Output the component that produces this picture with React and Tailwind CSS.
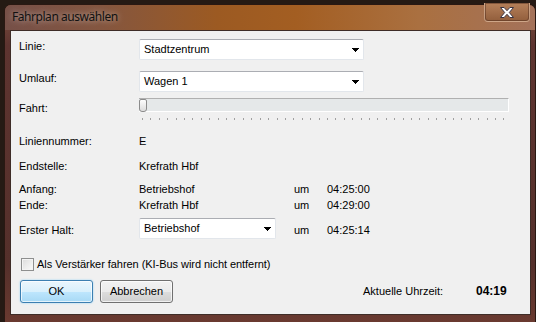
const ticks = Array.from({ length: 44 });

function Combo({ value, className }) {
  return (
    <div
      className={`flex h-[21px] items-center justify-between rounded-[2px] border border-[#e2e6eb] border-t-[#abadb3] bg-white pl-[4px] pr-[4px] ${className}`}
    >
      <span className="leading-[13px]">{value}</span>
      <svg width="7" height="4" viewBox="0 0 7 4" shapeRendering="crispEdges">
        <path d="M0 0h7L3.5 4z" fill="#000" />
      </svg>
    </div>
  );
}

function Label({ children, className = "" }) {
  return <div className={`w-[120px] shrink-0 leading-[13px] ${className}`}>{children}</div>;
}

export default function App() {
  return (
    <div className="h-[322px] w-[536px] overflow-hidden bg-[#251a14] pl-[4px] pt-[4px] font-['Liberation_Sans',Arial,sans-serif] text-[11px] text-black">
      <div className="flex h-[320px] w-[532px] flex-col rounded-t-[7px] border border-[#2a1812] bg-[linear-gradient(to_bottom,#7a4e3c_0px,#5e3430_40px,#55302b_260px,#6a3a30_100%)]">
        {/* title bar */}
        <div className="flex h-[25px] shrink-0 items-start justify-between rounded-t-[6px] bg-[linear-gradient(to_right,#765048_0%,#845640_18%,#9c5a22_40%,#a35e22_55%,#aa7040_78%,#a4725a_100%)]">
          <span className="mt-[4px] pl-[7px] font-['Noto_Sans',sans-serif] text-[12px] leading-[16px] tracking-[-0.45px] text-[#111] [text-shadow:0_0_6px_rgba(255,255,255,0.6)]">
            Fahrplan auswählen
          </span>
          <div className="mr-[5px] mt-[-2px] flex h-[19px] w-[46px] items-center justify-center rounded-b-[4px] border border-t-0 border-[#e0c0a8]/60 bg-[linear-gradient(to_bottom,#b5805a,#925e3c)] shadow-[inset_0_0_0_1px_rgba(60,30,20,0.4)]">
            <svg width="14" height="11" viewBox="0 0 14 11">
              <path
                d="M0.5 0.5h3.6l2.9 3.2 2.9-3.2h3.6L9.3 5.5l4.2 5h-3.6L7 7.3 4.1 10.5H0.5l4.2-5z"
                fill="#fff"
                stroke="#3a3442"
                strokeWidth="1"
              />
            </svg>
          </div>
        </div>

        {/* client area */}
        <div className="ml-[5px] flex h-[285px] w-[521px] flex-col border border-[#3e2c27] bg-[#f0f0f0] pl-[8px]">
          <div className="mt-[8px] flex items-start">
            <Label className="pt-[1px]">Linie:</Label>
            <Combo value="Stadtzentrum" className="w-[225px]" />
          </div>

          <div className="mt-[11px] flex items-start">
            <Label className="pt-[1px]">Umlauf:</Label>
            <Combo value="Wagen 1" className="w-[225px]" />
          </div>

          <div className="mt-[6px] flex items-start">
            <Label className="pt-[4px]">Fahrt:</Label>
            <div className="flex flex-col">
              <div className="relative h-[14px] w-[370px] border-t border-r border-b border-t-[#b0b0b0] border-r-white border-b-white bg-[#e5e8e9]">
                <div className="absolute left-0 top-0 h-[13px] w-[8px] rounded-[2px] rounded-b-[3px] border border-[#8c8c8c] bg-[linear-gradient(to_bottom,#fdfdfd,#dcdcdc)]" />
              </div>
              <div className="ml-[3px] mt-[6px] flex w-[363px] justify-between">
                {ticks.map((_, i) => (
                  <div key={i} className="h-[2px] w-px bg-[#a0a0a0]" />
                ))}
              </div>
            </div>
          </div>

          <div className="mt-[15px] flex">
            <Label>Liniennummer:</Label>
            <span className="leading-[13px]">E</span>
          </div>

          <div className="mt-[12px] flex">
            <Label>Endstelle:</Label>
            <span className="leading-[13px]">Krefrath Hbf</span>
          </div>

          <div className="mt-[10px] flex leading-[13px]">
            <Label>Anfang:</Label>
            <span className="w-[155px]">Betriebshof</span>
            <span className="w-[33px]">um</span>
            <span>04:25:00</span>
          </div>

          <div className="mt-[3px] flex leading-[13px]">
            <Label>Ende:</Label>
            <span className="w-[155px]">Krefrath Hbf</span>
            <span className="w-[33px]">um</span>
            <span>04:29:00</span>
          </div>

          <div className="mt-[6px] flex items-start">
            <Label className="pt-[6px]">Erster Halt:</Label>
            <Combo value="Betriebshof" className="w-[137px]" />
            <span className="ml-[18px] w-[33px] pt-[6px] leading-[13px]">um</span>
            <span className="pt-[6px] leading-[13px]">04:25:14</span>
          </div>

          <div className="mt-[19px] flex h-[13px] items-center">
            <div className="ml-[2px] h-[13px] w-[13px] border border-[#8e8f8f] bg-[linear-gradient(to_bottom_right,#dcdcdc,#fbfbfb)] shadow-[inset_0_0_0_1px_#f4f4f4]" />
            <span className="ml-[3px] leading-[13px] tracking-[-0.05px]">Als Verstärker fahren (KI-Bus wird nicht entfernt)</span>
          </div>

          <div className="mt-[9px] flex h-[23px] items-center">
            <button
              type="button"
              className="ml-[1px] h-[23px] w-[73px] rounded-[3px] border border-[#3c7fb1] bg-[linear-gradient(to_bottom,#eaf6fd_0%,#d9f0fc_50%,#bee6fd_51%,#a7d9f5_100%)] leading-[13px] shadow-[inset_0_0_0_1px_rgba(255,255,255,0.7),0_0_2px_#8fd0f5]"
            >
              OK
            </button>
            <button
              type="button"
              className="ml-[7px] h-[23px] w-[73px] rounded-[3px] border border-[#707070] bg-[linear-gradient(to_bottom,#f2f2f2_0%,#ebebeb_50%,#dddddd_51%,#cfcfcf_100%)] leading-[13px] shadow-[inset_0_0_0_1px_rgba(255,255,255,0.7)]"
            >
              Abbrechen
            </button>
            <span className="ml-[190px] w-[113px] leading-[13px]">Aktuelle Uhrzeit:</span>
            <span className="text-[12px] font-bold leading-[13px]">04:19</span>
          </div>
        </div>
      </div>
    </div>
  );
}
